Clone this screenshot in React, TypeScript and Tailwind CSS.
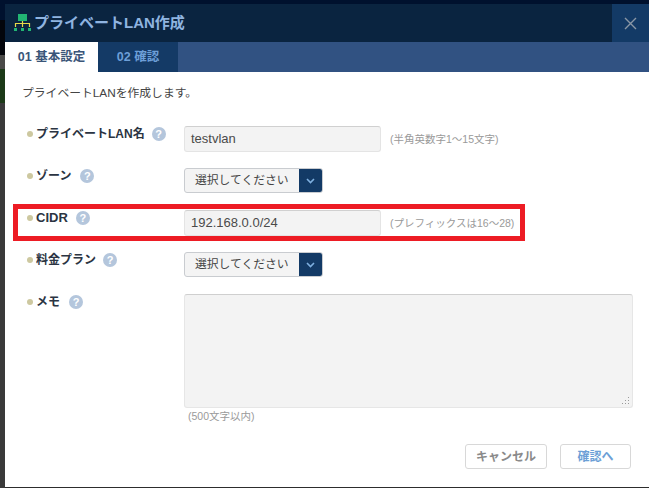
const font = { fontFamily: '"Liberation Sans", "Noto Sans CJK JP", sans-serif' }

function Help() {
  return (
    <span className="inline-flex h-[14px] w-[14px] items-center justify-center rounded-full bg-[#b4c6dc] text-[11px] font-bold leading-none text-white">
      ?
    </span>
  )
}

function Label({ text, className = "mr-[7px] text-[12px]" }: { text: string; className?: string }) {
  return (
    <div className="flex h-[16px] w-[157px] shrink-0 items-center">
      <span className="mr-[3px] h-[6px] w-[6px] rounded-full bg-[#cdc8a0]" />
      <span className={`font-bold text-[#2b3442] ${className}`}>{text}</span>
      <Help />
    </div>
  )
}

function Select() {
  return (
    <div className="flex h-[25px] w-[139px] overflow-hidden rounded-[3px] border border-[#c9ccd0] bg-[#f4f4f4]">
      <span className="flex-1 pl-[10px] text-[11.8px] leading-[22px] text-[#444]">選択してください</span>
      <span className="flex w-[23px] items-center justify-center bg-[#133a66]">
        <svg width="9" height="6" viewBox="0 0 9 6" fill="none" stroke="#7fb0e0" strokeWidth="1.6">
          <path d="M1 1l3.5 3.5L8 1" />
        </svg>
      </span>
    </div>
  )
}

function TextBox({ value }: { value: string }) {
  return (
    <div className="h-[26px] w-[197px] rounded-[3px] border border-[#e4e4e4] border-t-[#d0d0d0] bg-[#f3f3f3] pl-[6px] text-[13px] leading-[24px] text-[#4a4a4a]">
      {value}
    </div>
  )
}

function Hint({ text, className = "" }: { text: string; className?: string }) {
  return <span className={`text-[10.5px] text-[#9a9a9a] ${className}`}>{text}</span>
}

function NetworkIcon() {
  return (
    <svg width="17" height="18" viewBox="0 0 17 18" className="mr-[3px]">
      <rect x="4" y="0" width="9" height="7" fill="#22b573" />
      <path d="M1.5 13v-3.500h14V13M8.500 7v6" fill="none" stroke="#e6d94a" strokeWidth="1.200" />
      <rect x="0" y="14" width="3" height="3" fill="#22b573" />
      <rect x="7" y="14" width="3" height="3" fill="#22b573" />
      <rect x="14" y="14" width="3" height="3" fill="#22b573" />
    </svg>
  )
}

export default function App() {
  return (
    <div className="relative flex h-[488px] w-[649px] overflow-hidden bg-[#2d2d2d]" style={font}>
      {/* page showing behind the dialog */}
      <div className="flex w-[5px] shrink-0 flex-col">
        <div className="h-[20px] bg-[#00112e]" />
        <div className="h-[35px] bg-[#03060c]" />
        <div className="h-[14px] bg-[#4a4a48]" />
        <div className="h-[34px] bg-[#1c3a18]" />
        <div className="flex-1 bg-[#3a3a3a]" />
      </div>

      <div className="flex-1">
        <div className="h-[4px] bg-[#00112e]" />
        <div className="h-[483px] bg-white">
          {/* title bar */}
          <div className="flex h-[38px] items-center bg-[#0a2440]">
            <div className="ml-[9px] flex flex-1 items-center">
              <NetworkIcon />
              <span className="text-[15px] font-bold text-[#8fb4e0]">プライベートLAN作成</span>
            </div>
            <div className="flex h-[38px] w-[37px] items-center justify-center bg-[#133a66]">
              <svg width="13" height="13" viewBox="0 0 13 13" stroke="#8a97a6" strokeWidth="1.400">
                <path d="M1 1l11 11M12 1L1 12" />
              </svg>
            </div>
          </div>

          {/* tabs */}
          <div className="flex h-[30px] bg-[#315282] text-[12.5px] font-bold">
            <div className="flex w-[93px] items-center justify-center bg-white text-[#3a5578]">01 基本設定</div>
            <div className="flex w-[80px] items-center justify-center bg-[#143a66] text-[#6d9fd8]">02 確認</div>
          </div>

          <p className="pl-[17px] pt-[11px] text-[11.8px] leading-[20px] text-[#444]">プライベートLANを作成します。</p>

          <div className="pl-[22px] pt-[23px]">
            <div className="flex h-[26px] items-start">
              <Label text="プライベートLAN名" />
              <TextBox value="testvlan" />
              <Hint text="(半角英数字1～15文字)" className="ml-[9px] leading-[26px]" />
            </div>
            <div className="mt-[16px] flex h-[25px] items-start">
              <Label text="ゾーン" className="mr-[9px] text-[12px]" />
              <Select />
            </div>
            <div className="mt-[17px] flex h-[26px] items-start">
              <Label text="CIDR" className="mr-[8px] text-[13px]" />
              <TextBox value="192.168.0.0/24" />
              <Hint text="(プレフィックスは16～28)" className="ml-[9px] leading-[26px]" />
            </div>
            <div className="mt-[16px] flex h-[25px] items-start">
              <Label text="料金プラン" />
              <Select />
            </div>
            <div className="mt-[17px] flex items-start">
              <Label text="メモ" className="mr-[9px] text-[12px]" />
              <div>
                <div className="relative h-[114px] w-[449px] rounded-[3px] border border-[#e6e6e6] border-t-[#cfcfcf] bg-[#f3f3f3]">
                  <svg width="8" height="8" viewBox="0 0 8 8" className="absolute bottom-[2px] right-[2px]" fill="#9a9a9a">
                    <rect x="6" y="0" width="1" height="1" />
                    <rect x="3" y="3" width="1" height="1" />
                    <rect x="6" y="3" width="1" height="1" />
                    <rect x="0" y="6" width="1" height="1" />
                    <rect x="3" y="6" width="1" height="1" />
                    <rect x="6" y="6" width="1" height="1" />
                  </svg>
                </div>
                <Hint text="(500文字以内)" className="ml-[4px] block leading-[16px]" />
              </div>
            </div>
          </div>

          {/* footer buttons */}
          <div className="mr-[18px] mt-[20px] flex justify-end gap-[13px] text-[12px] font-bold">
            <button className="h-[25px] w-[82px] rounded-[3px] border border-[#d8d8d8] bg-white text-[#8a8a8a]">キャンセル</button>
            <button className="h-[25px] w-[71px] rounded-[3px] border border-[#d8d8d8] bg-white text-[#6c9fd6]">確認へ</button>
          </div>
        </div>
      </div>

      {/* red annotation around the CIDR row */}
      <div className="absolute left-[13px] top-[204px] h-[37px] w-[512px] border-[5px] border-[#ed1c24]" />
    </div>
  )
}
